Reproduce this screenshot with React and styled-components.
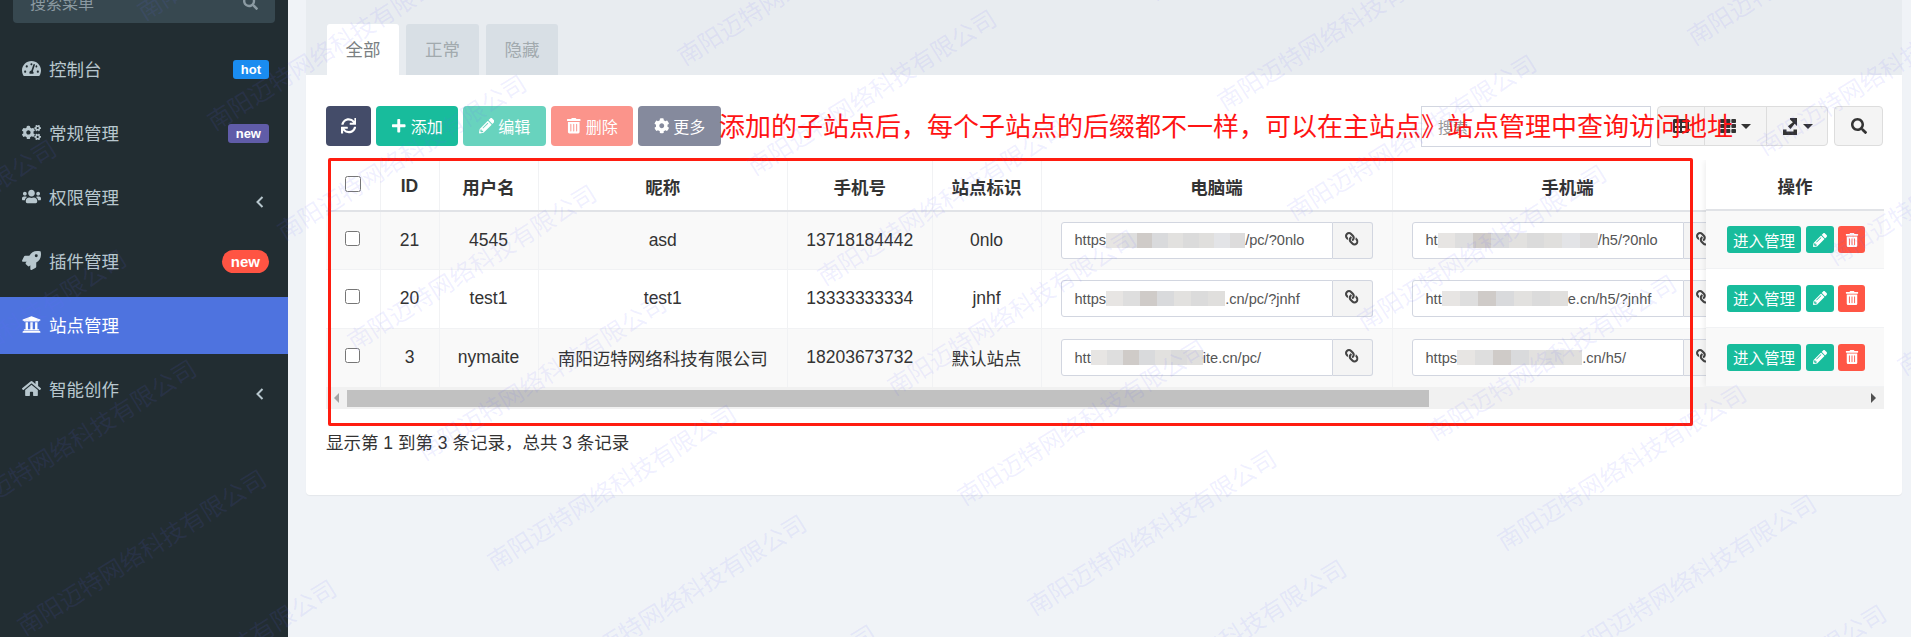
import React from "react";
import styled, { createGlobalStyle } from "styled-components";
import {
  FaTachometerAlt, FaCogs, FaUsers, FaRocket, FaUniversity, FaHome, FaSearch,
  FaSync, FaPlus, FaPencilAlt, FaTrashAlt, FaCog, FaLink, FaTh, FaTable,
} from "react-icons/fa";

const FONT = `"Liberation Sans", "Noto Sans CJK SC", sans-serif`;

const Global = createGlobalStyle`
  html, body { margin: 0; padding: 0; height: 637px; overflow: hidden; background: #f0f3f7; }
  body { font-family: ${FONT}; font-size: 17.5px; color: #333; }
  * { box-sizing: border-box; }
`;

const Page = styled.div`
  position: relative;
  display: flex;
  width: 1911px;
  height: 637px;
  overflow: hidden;
  background: #f0f3f7;
`;

/* Sidebar */
const Sidebar = styled.aside`
  flex: 0 0 288px;
  background: #222d32;
  display: flex;
  flex-direction: column;
`;
const MenuSearch = styled.div`
  margin: -15px 13px 0;
  height: 38px;
  flex: none;
  padding: 0 17px 4px;
  background: #374850;
  border-radius: 4px;
  display: flex;
  align-items: center;
  justify-content: space-between;
  color: #8b9aa2;
  font-size: 16px;
  svg { font-size: 15px; }
`;
const Menu = styled.nav`
  margin-top: 18px;
  display: flex;
  flex-direction: column;
  gap: 7px;
`;
const MenuItem = styled.div`
  height: 57px;
  padding: 0 19px 3px 22px;
  display: flex;
  align-items: center;
  color: ${(p) => (p.$active ? "#fff" : "#b8c7ce")};
  background: ${(p) => (p.$active ? "#4e73df" : "transparent")};
  font-size: 17.5px;
`;
const MenuIcon = styled.span`
  flex: 0 0 27px;
  display: flex;
  align-items: center;
  svg { font-size: 19px; }
`;
const MenuLabel = styled.span`
  flex: 1;
`;
const Badge = styled.span`
  margin-top: 3px;
  height: ${(p) => (p.$pill ? "23px" : "19px")};
  padding: 0 ${(p) => (p.$pill ? "9px" : "8px")};
  display: flex;
  align-items: center;
  color: #fff;
  font-size: ${(p) => (p.$pill ? "15px" : "13px")};
  font-weight: 700;
  border-radius: ${(p) => (p.$pill ? "12px" : "3px")};
  background: ${(p) => p.$bg};
`;
const Chevron = styled.svg`
  width: 8px;
  height: 12px;
  margin: 11px 5px 0 0;
  fill: none;
  stroke: #b8c7ce;
  stroke-width: 2;
`;

/* Main */
const Main = styled.main`
  flex: 1;
  padding: 0 9px 0 18px;
  display: flex;
  flex-direction: column;
  align-items: stretch;
`;
const TabBar = styled.div`
  height: 75px;
  flex: none;
  padding: 24px 0 0 21px;
  background: #e8ecf0;
  display: flex;
  gap: 7px;
`;
const Tab = styled.div`
  width: ${(p) => p.$w}px;
  height: 51px;
  display: flex;
  align-items: center;
  justify-content: center;
  padding-bottom: 3px;
  font-size: 17.5px;
  border-radius: 3px 3px 0 0;
  background: ${(p) => (p.$active ? "#fff" : "#d8dfe5")};
  color: ${(p) => (p.$active ? "#7b7f82" : "#a2aaae")};
`;
const Panel = styled.section`
  position: relative;
  height: 420px;
  flex: none;
  background: #fff;
  padding: 31px 18px 0 20px;
  border-radius: 0 0 4px 4px;
  box-shadow: 0 1px 1px rgba(0, 0, 0, 0.05);
`;
const Toolbar = styled.div`
  display: flex;
  align-items: flex-start;
  height: 41px;
  margin-bottom: 13px;
`;
const ActionGroup = styled.div`
  display: flex;
  gap: 5px;
`;
const ActionBtn = styled.div`
  width: ${(p) => p.$w}px;
  height: 40px;
  display: flex;
  align-items: center;
  justify-content: center;
  gap: 4px;
  color: #fff;
  font-size: 16px;
  border-radius: 4px;
  background: ${(p) => p.$bg};
  opacity: ${(p) => (p.$dim ? 0.65 : 1)};
  svg { font-size: 15.5px; }
`;
const RightTools = styled.div`
  margin: 0 1px 0 auto;
  display: flex;
  gap: 7px;
`;
const SearchField = styled.div`
  width: 230px;
  height: 41px;
  border: 1px solid #d2d6e0;
  padding: 0 16px;
  display: flex;
  align-items: center;
  color: #999;
  font-size: 15px;
`;
const BtnGroup = styled.div`
  display: flex;
`;
const ToolBtn = styled.div`
  width: ${(p) => p.$w}px;
  height: 40px;
  display: flex;
  align-items: center;
  justify-content: center;
  gap: 5px;
  color: #333;
  background: #f4f4f4;
  border: 1px solid #ddd;
  margin-left: -1px;
  border-radius: ${(p) => p.$r || "0"};
  svg { font-size: 16px; }
`;
const Caret = styled.i`
  width: 0;
  height: 0;
  border-left: 5px solid transparent;
  border-right: 5px solid transparent;
  border-top: 5px solid #333;
`;

/* Table */
const TableWrap = styled.div`
  position: relative;
  height: 227px;
  overflow: hidden;
`;
const Table = styled.table`
  width: 1417px;
  table-layout: fixed;
  border-collapse: collapse;
`;
const Th = styled.th`
  height: 51px;
  font-size: 17.5px;
  font-weight: 700;
  text-align: center;
  color: #333;
  border-right: 1px solid #f1f2f4;
  border-bottom: 2px solid #e1e3e7;
  padding: 2px 0 0;
`;
const Tr = styled.tr`
  height: ${(p) => p.$h}px;
  background: ${(p) => (p.$odd ? "#f9f9f9" : "#fff")};
`;
const Td = styled.td`
  text-align: center;
  color: #333;
  font-size: 17.5px;
  border-right: 1px solid #f1f2f4;
  border-bottom: 1px solid #f1f2f4;
  padding: 0;
  white-space: nowrap;
`;
const Check = styled.input.attrs({ type: "checkbox", readOnly: true })`
  width: ${(p) => p.$s}px;
  height: ${(p) => p.$s}px;
  margin: 0 0 5px;
  vertical-align: middle;
`;
const UrlGroup = styled.div`
  display: flex;
  width: ${(p) => p.$w}px;
  height: 37px;
  margin: 0 0 0 ${(p) => p.$ml}px;
`;
const UrlInput = styled.div`
  flex: 1;
  min-width: 0;
  display: flex;
  align-items: center;
  padding-left: 13px;
  background: #fff;
  border: 1px solid #d2d6e0;
  border-radius: 3px 0 0 3px;
  color: #555;
  font-size: 14.6px;
  overflow: hidden;
`;
const Mosaic = styled.span`
  flex: none;
  display: flex;
  height: 15px;
  box-shadow: 0 -6px 0 rgba(255, 255, 255, 0.9), 0 6px 0 rgba(255, 255, 255, 0.9);
`;
const MosaicCell = styled.i`
  flex: 1;
`;
const UrlAddon = styled.div`
  flex: 0 0 40px;
  display: flex;
  align-items: center;
  justify-content: center;
  padding-bottom: 3px;
  background: #f4f4f4;
  border: 1px solid #d2d6e0;
  border-left: 0;
  border-radius: 0 3px 3px 0;
  color: #444;
  svg { font-size: 13.5px; transform: scaleX(-1); }
`;
const FixedCol = styled.div`
  position: absolute;
  top: 0;
  right: 0;
  width: 178px;
  display: flex;
  flex-direction: column;
  background: #fff;
  box-shadow: 0 0 7px rgba(0, 0, 0, 0.1);
`;
const FixedHead = styled.div`
  height: 51px;
  padding-top: 2px;
  display: flex;
  align-items: center;
  justify-content: center;
  font-weight: 700;
  color: #333;
  border-bottom: 2px solid #e1e3e7;
`;
const FixedRow = styled.div`
  height: ${(p) => p.$h}px;
  padding-left: 21px;
  display: flex;
  align-items: center;
  background: ${(p) => (p.$odd ? "#f9f9f9" : "#fff")};
  border-bottom: 1px solid #f1f2f4;
`;
const RowBtn = styled.div`
  width: ${(p) => p.$w}px;
  height: 27px;
  margin-right: ${(p) => p.$mr || 0}px;
  display: flex;
  align-items: center;
  justify-content: center;
  color: #fff;
  font-size: 15.5px;
  border-radius: 3px;
  background: ${(p) => p.$bg};
  svg { font-size: 14px; }
`;
const ScrollBar = styled.div`
  height: 22px;
  display: flex;
  align-items: center;
  background: #f1f1f1;
`;
const ScrollArrow = styled.span`
  flex: 0 0 21px;
  display: flex;
  justify-content: center;
  &::before {
    content: "";
    border-top: 5px solid transparent;
    border-bottom: 5px solid transparent;
    ${(p) => (p.$right ? "border-left: 5px solid #505050;" : "border-right: 5px solid #a3a3a3;")}
  }
`;
const ScrollThumb = styled.span`
  flex: 0 0 1082px;
  height: 17px;
  background: #c1c1c1;
`;
const ScrollGap = styled.span`
  flex: 1;
`;
const Info = styled.div`
  margin-top: 22px;
  line-height: 24px;
  font-size: 17.5px;
  color: #333;
`;

/* Overlays */
const Annotation = styled.div`
  position: absolute;
  left: 413px;
  top: 39px;
  font-size: 26px;
  line-height: 27px;
  color: #ff1414;
  white-space: nowrap;
`;
const RedFrame = styled.div`
  position: absolute;
  left: 22px;
  top: 83px;
  width: 1365px;
  height: 268px;
  border: 3px solid #ff1d10;
  border-radius: 2px;
`;
const WatermarkLayer = styled.div`
  position: absolute;
  inset: 0;
  overflow: hidden;
  pointer-events: none;
`;
const Mark = styled.span`
  position: absolute;
  transform: translate(-50%, -50%) rotate(-32deg);
  white-space: nowrap;
  font-size: 24px;
  color: rgba(105, 105, 255, 0.1);
`;

const MOSAIC = ["#e7e5e3", "#dedede", "#cfcbc8", "#d9dadc", "#e2e1df", "#dbdbdb", "#e0dfdd", "#e3e4e7", "#dddcdc"];
const Blur = ({ w, count = 7 }) => (
  <Mosaic style={{ width: w }}>
    {MOSAIC.slice(0, count).map((c) => (
      <MosaicCell key={c} style={{ background: c }} />
    ))}
  </Mosaic>
);

const Url = ({ pre, w, post, groupW, ml, count }) => (
  <UrlGroup $w={groupW} $ml={ml}>
    <UrlInput>
      {pre}
      <Blur w={w} count={count} />
      {post}
    </UrlInput>
    <UrlAddon><FaLink /></UrlAddon>
  </UrlGroup>
);

const ROWS = [
  { id: 21, user: "4545", nick: "asd", phone: "13718184442", tag: "0nlo", h: 58,
    pc: ["https", 139, "/pc/?0nlo", 9], h5: ["ht", 160, "/h5/?0nlo", 9] },
  { id: 20, user: "test1", nick: "test1", phone: "13333333334", tag: "jnhf", h: 59,
    pc: ["https", 119, ".cn/pc/?jnhf", 7], h5: ["htt", 126, "e.cn/h5/?jnhf", 7] },
  { id: 3, user: "nymaite", nick: "南阳迈特网络科技有限公司", phone: "18203673732", tag: "默认站点", h: 59,
    pc: ["htt", 112, "ite.cn/pc/", 7], h5: ["https", 125, ".cn/h5/", 7] },
];

const COLS = [54, 59, 99, 249.5, 144.5, 109, 351, 351];

const Angle = () => (
  <Chevron viewBox="0 0 8 12"><polyline points="6.5,1 1.5,6 6.5,11" /></Chevron>
);

const MENU = [
  { icon: <FaTachometerAlt />, label: "控制台", badge: <Badge $bg="#1a8cf0">hot</Badge> },
  { icon: <FaCogs />, label: "常规管理", badge: <Badge $bg="#605ca8">new</Badge> },
  { icon: <FaUsers />, label: "权限管理", badge: <Angle /> },
  { icon: <FaRocket />, label: "插件管理", badge: <Badge $pill $bg="#ff5443">new</Badge> },
  { icon: <FaUniversity />, label: "站点管理", active: true },
  { icon: <FaHome />, label: "智能创作", badge: <Angle /> },
];

const marks = [];
for (let i = -8; i <= 8; i++) {
  for (let j = -4; j <= 5; j++) {
    const x = 331 + i * 70 + j * 470;
    const y = 46 + i * 110 - j * 65;
    if (x > -200 && x < 2110 && y > -110 && y < 750) marks.push({ x, y, k: `${i}_${j}` });
  }
}

const ExportIcon = () => (
  <svg width="16" height="17" viewBox="0 0 16 17" fill="#333">
    <path d="M1 11.5h3.5v2h7v-2H15V17H1z" />
    <path d="M15 0v8l-2.3-2.3-4.2 5.2-2.6-2.6 5-4L8 1.5V0z" />
  </svg>
);

export default function App() {
  return (
    <>
      <Global />
      <Page>
        <Sidebar>
          <MenuSearch>
            <span>搜索菜单</span>
            <FaSearch />
          </MenuSearch>
          <Menu>
            {MENU.map((m) => (
              <MenuItem key={m.label} $active={m.active}>
                <MenuIcon>{m.icon}</MenuIcon>
                <MenuLabel>{m.label}</MenuLabel>
                {m.badge}
              </MenuItem>
            ))}
          </Menu>
        </Sidebar>
        <Main>
          <TabBar>
            <Tab $active $w={72}>全部</Tab>
            <Tab $w={73}>正常</Tab>
            <Tab $w={72}>隐藏</Tab>
          </TabBar>
          <Panel>
            <Toolbar>
              <ActionGroup>
                <ActionBtn $w={45} $bg="#444c69"><FaSync /></ActionBtn>
                <ActionBtn $w={82} $bg="#18bc9c"><FaPlus />添加</ActionBtn>
                <ActionBtn $w={83} $bg="#18bc9c" $dim><FaPencilAlt />编辑</ActionBtn>
                <ActionBtn $w={82} $bg="#f95b4e" $dim><FaTrashAlt />删除</ActionBtn>
                <ActionBtn $w={83} $bg="#444c69" $dim><FaCog />更多</ActionBtn>
              </ActionGroup>
              <RightTools>
                <SearchField>搜索</SearchField>
                <BtnGroup>
                  <ToolBtn $w={48} $r="4px 0 0 4px"><FaTable /></ToolBtn>
                  <ToolBtn $w={63}><FaTh /><Caret /></ToolBtn>
                  <ToolBtn $w={62} $r="0 4px 4px 0"><ExportIcon /><Caret /></ToolBtn>
                </BtnGroup>
                <ToolBtn $w={49} $r="4px"><FaSearch /></ToolBtn>
              </RightTools>
            </Toolbar>
            <TableWrap>
              <Table>
                <colgroup>
                  {COLS.map((w, i) => <col key={i} style={{ width: w }} />)}
                </colgroup>
                <thead>
                  <tr>
                    <Th><Check $s={16} /></Th>
                    <Th>ID</Th>
                    <Th>用户名</Th>
                    <Th>昵称</Th>
                    <Th>手机号</Th>
                    <Th>站点标识</Th>
                    <Th>电脑端</Th>
                    <Th>手机端</Th>
                  </tr>
                </thead>
                <tbody>
                  {ROWS.map((r, i) => (
                    <Tr key={r.id} $h={r.h} $odd={i !== 1}>
                      <Td><Check $s={15} /></Td>
                      <Td>{r.id}</Td>
                      <Td>{r.user}</Td>
                      <Td>{r.nick}</Td>
                      <Td>{r.phone}</Td>
                      <Td>{r.tag}</Td>
                      <Td><Url pre={r.pc[0]} w={r.pc[1]} post={r.pc[2]} count={r.pc[3]} groupW={312} ml={19} /></Td>
                      <Td><Url pre={r.h5[0]} w={r.h5[1]} post={r.h5[2]} count={r.h5[3]} groupW={312} ml={19} /></Td>
                    </Tr>
                  ))}
                </tbody>
              </Table>
              <FixedCol>
                <FixedHead>操作</FixedHead>
                {ROWS.map((r, i) => (
                  <FixedRow key={r.id} $h={r.h} $odd={i !== 1}>
                    <RowBtn $w={74} $mr={5} $bg="#18bc9c">进入管理</RowBtn>
                    <RowBtn $w={28} $mr={4} $bg="#18bc9c"><FaPencilAlt /></RowBtn>
                    <RowBtn $w={27} $bg="#ff5645"><FaTrashAlt /></RowBtn>
                  </FixedRow>
                ))}
              </FixedCol>
            </TableWrap>
            <ScrollBar>
              <ScrollArrow />
              <ScrollThumb />
              <ScrollGap />
              <ScrollArrow $right />
            </ScrollBar>
            <Info>显示第 1 到第 3 条记录，总共 3 条记录</Info>
            <Annotation>添加的子站点后，每个子站点的后缀都不一样，可以在主站点》站点管理中查询访问地址</Annotation>
            <RedFrame />
          </Panel>
        </Main>
        <WatermarkLayer>
          {marks.map((m) => (
            <Mark key={m.k} style={{ left: m.x, top: m.y }}>南阳迈特网络科技有限公司</Mark>
          ))}
        </WatermarkLayer>
      </Page>
    </>
  );
}
